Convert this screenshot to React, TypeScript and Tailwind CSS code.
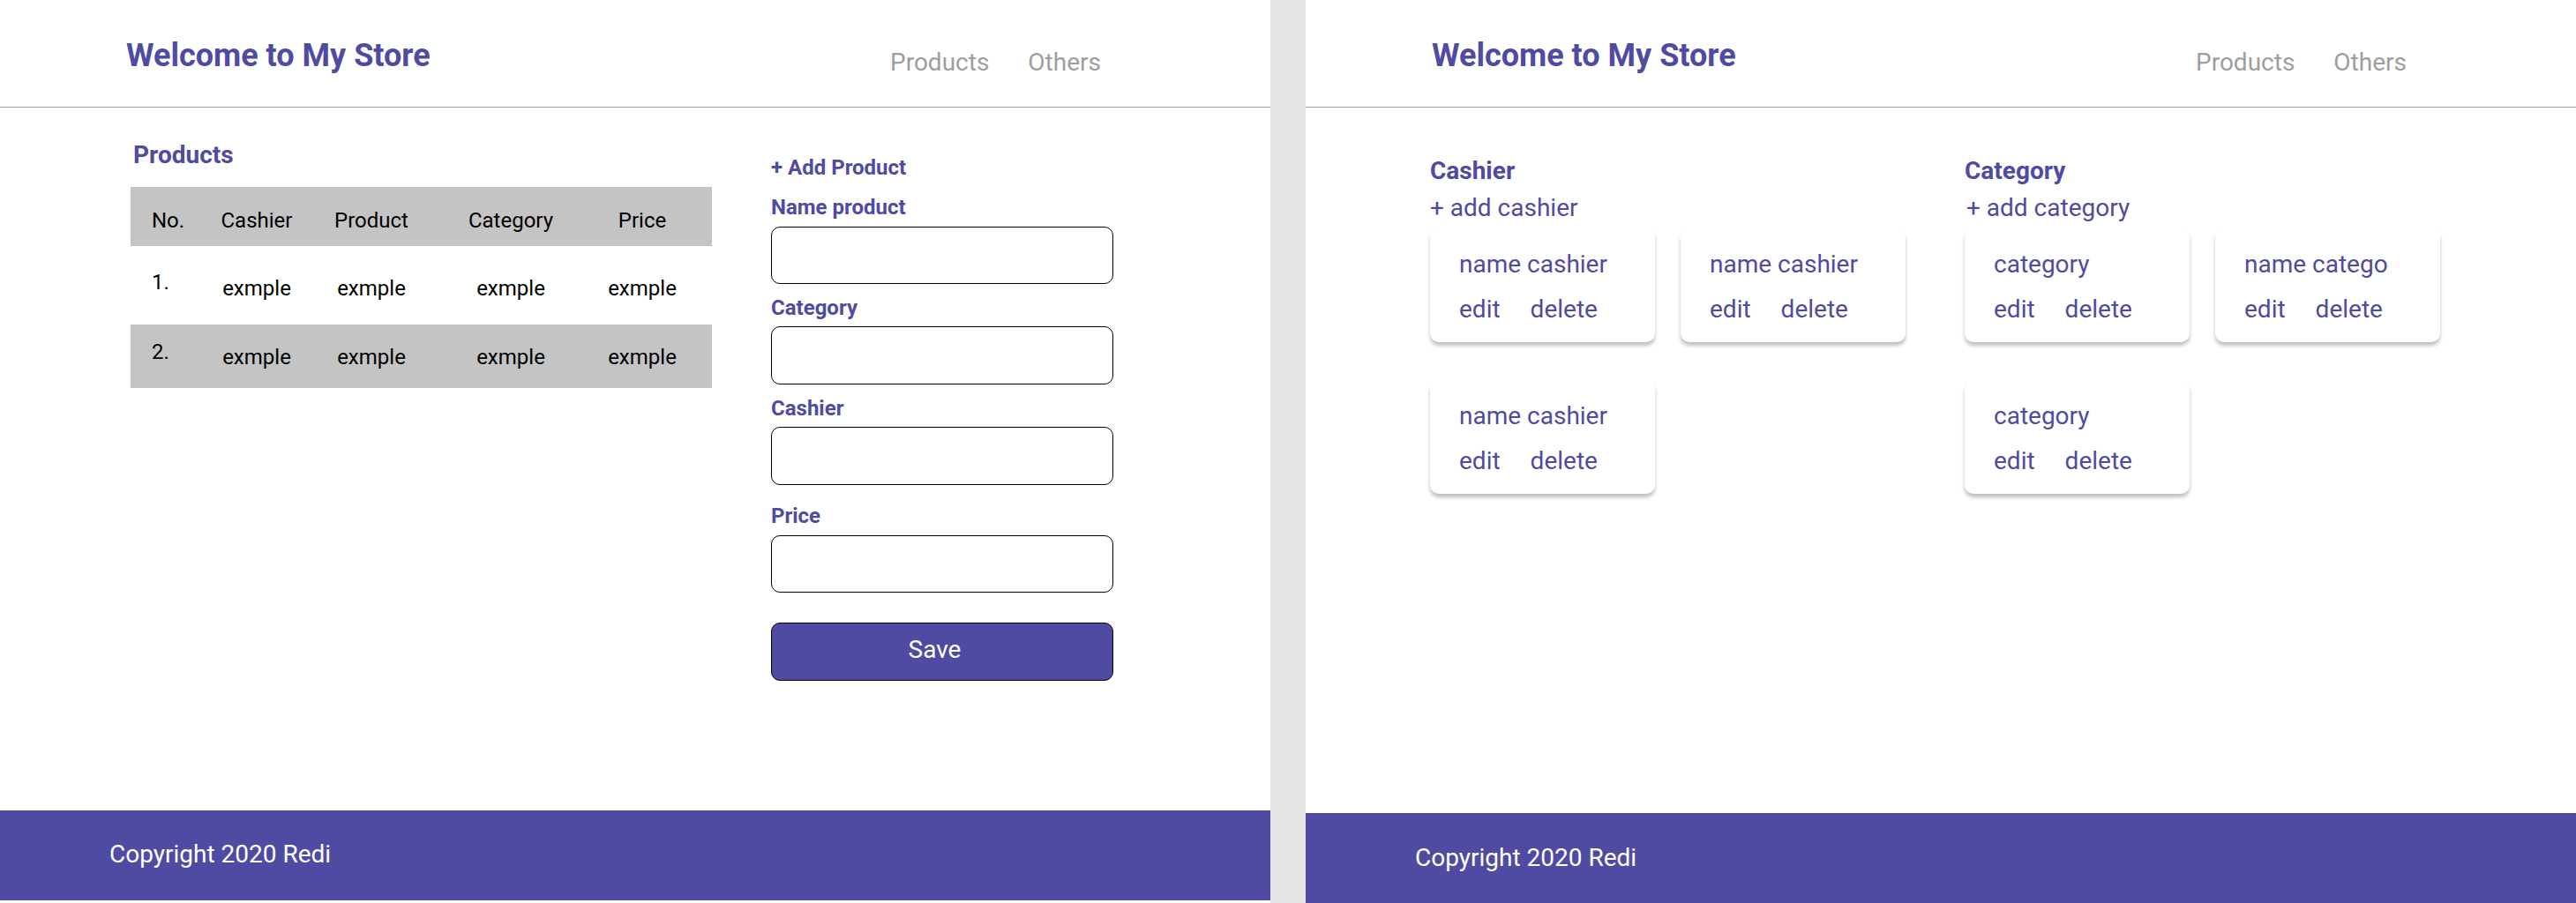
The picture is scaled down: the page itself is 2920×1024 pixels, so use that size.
import React from 'react'

const rows = [
  { no: '1.', h: 'h-[89px]', noPad: 'pt-[27px]', pad: 'pt-[34px]', bg: 'bg-white' },
  { no: '2.', h: 'h-[72px]', noPad: 'pt-[17px]', pad: 'pt-[23px]', bg: 'bg-[#c4c4c4]' },
]

function Header() {
  return (
    <header className="grid h-[122px] shrink-0 grid-cols-[1009px_1fr] border-b border-[#9a9a9a]">
      <h1 className="pl-[143px] pt-[42px] text-[36px] font-bold leading-[42px] text-[#4f4ba2]">
        Welcome to My Store
      </h1>
      <nav className="flex gap-[44px] pt-[54px] text-[28px] leading-[33px] text-[#9e9e9e]">
        <a href="#">Products</a>
        <a href="#">Others</a>
      </nav>
    </header>
  )
}

function Footer({ className }: { className: string }) {
  return (
    <footer className={`h-[102px] shrink-0 bg-[#4f4ba2] pl-[124px] text-[28px] leading-[33px] text-white ${className}`}>
      Copyright 2020 Redi
    </footer>
  )
}

function Field({ label, mt, inputMt, h }: { label: string; mt: string; inputMt: string; h: string }) {
  return (
    <>
      <label className={`block text-[24px] font-bold leading-[28px] text-[#4f4ba2] ${mt}`}>{label}</label>
      <input
        type="text"
        className={`block w-full rounded-[10px] border border-black bg-white outline-none ${inputMt} ${h}`}
      />
    </>
  )
}

function ProductsPage() {
  return (
    <div className="flex h-[1024px] w-[1440px] shrink-0 flex-col bg-white">
      <Header />
      <main className="flex flex-1 pl-[148px]">
        <section className="w-[659px] pt-[37px]">
          <h2 className="ml-[3px] text-[28px] font-bold leading-[33px] text-[#4f4ba2]">Products</h2>
          <div className="mt-[20px] text-[24px] leading-[28px] text-black">
            <div className="grid h-[67px] grid-cols-[84px_118px_142px_174px_124px] bg-[#c4c4c4] pt-[24px]">
              <span className="pl-[24px]">No.</span>
              <span className="text-center">Cashier</span>
              <span className="text-center">Product</span>
              <span className="text-center">Category</span>
              <span className="text-center">Price</span>
            </div>
            {rows.map((r) => (
              <div key={r.no} className={`grid grid-cols-[84px_118px_142px_174px_124px] ${r.h} ${r.bg}`}>
                <span className={`pl-[24px] ${r.noPad}`}>{r.no}</span>
                <span className={`text-center ${r.pad}`}>exmple</span>
                <span className={`text-center ${r.pad}`}>exmple</span>
                <span className={`text-center ${r.pad}`}>exmple</span>
                <span className={`text-center ${r.pad}`}>exmple</span>
              </div>
            ))}
          </div>
        </section>

        <form className="ml-[67px] w-[388px] pt-[54px]">
          <p className="text-[24px] font-bold leading-[28px] text-[#4f4ba2]">+ Add Product</p>
          <Field label="Name product" mt="mt-[17px]" inputMt="mt-[8px]" h="h-[65px]" />
          <Field label="Category" mt="mt-[13px]" inputMt="mt-[7px]" h="h-[66px]" />
          <Field label="Cashier" mt="mt-[13px]" inputMt="mt-[7px]" h="h-[66px]" />
          <Field label="Price" mt="mt-[21px]" inputMt="mt-[8px]" h="h-[65px]" />
          <button
            type="button"
            className="mt-[34px] flex h-[66px] w-full items-center justify-center rounded-[10px] border border-black bg-[#4f4ba2] pb-[5px] pr-[17px] text-[28px] leading-[33px] text-white"
          >
            Save
          </button>
        </form>
      </main>
      <Footer className="mb-[3px] pt-[33px]" />
    </div>
  )
}

function Card({ name }: { name: string }) {
  return (
    <div className="h-[128px] rounded-[10px] bg-white pl-[33px] pt-[23px] text-[28px] leading-[33px] text-[#4f4ba2] shadow-[0_4px_4px_rgba(0,0,0,0.25)]">
      <p>{name}</p>
      <div className="mt-[18px] flex gap-[34px]">
        <a href="#">edit</a>
        <a href="#">delete</a>
      </div>
    </div>
  )
}

function Group({ title, add, names, addClass }: { title: string; add: string; names: string[]; addClass: string }) {
  return (
    <section className="w-[606px] shrink-0">
      <h2 className="text-[28px] font-bold leading-[33px] text-[#4f4ba2]">{title}</h2>
      <p className={`mt-[9px] text-[28px] leading-[33px] text-[#4f4ba2] ${addClass}`}>{add}</p>
      <div className="mt-[8px] grid grid-cols-[255px_255px] gap-x-[29px] gap-y-[44px]">
        {names.map((n, i) => (
          <Card key={i} name={n} />
        ))}
      </div>
    </section>
  )
}

function OthersPage() {
  return (
    <div className="flex h-[1024px] w-[1440px] shrink-0 flex-col bg-white">
      <Header />
      <main className="flex flex-1 pl-[141px] pt-[55px]">
        <Group title="Cashier" add="+ add cashier" names={['name cashier', 'name cashier', 'name cashier']} addClass="" />
        <Group title="Category" add="+ add category" names={['category', 'name catego', 'category']} addClass="ml-[2px]" />
      </main>
      <Footer className="pt-[34px]" />
    </div>
  )
}

export default function App() {
  return (
    <div className="flex h-[1024px] w-[2920px] gap-[40px] overflow-hidden bg-[#e5e5e5] font-['Roboto',sans-serif]">
      <ProductsPage />
      <OthersPage />
    </div>
  )
}
